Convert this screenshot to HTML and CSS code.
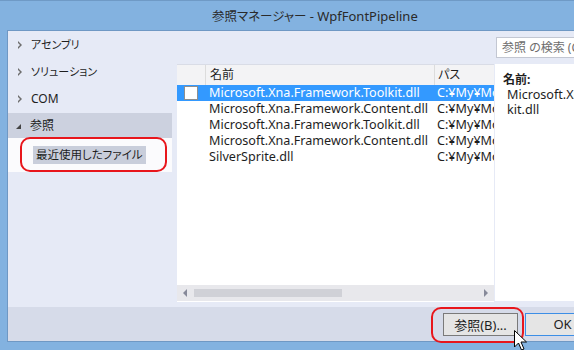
FILE: index.html
```html
<!DOCTYPE html>
<html lang="ja">
<head>
    <meta charset="UTF-8">
    <title>参照マネージャー</title>
    <link rel="stylesheet" href="styles.css">
</head>
<body>
    <div class="window">
        <div class="titlebar"><span class="title-ja">参照マネージャー</span> - WpfFontPipeline</div>
        <div class="client">
            <div class="main">
                <div class="nav">
                    <div class="nav-item"><span class="tri"></span>アセンブリ</div>
                    <div class="nav-item"><span class="tri"></span>ソリューション</div>
                    <div class="nav-item com"><span class="tri"></span>COM</div>
                    <div class="nav-item open"><span class="tri-open"></span>参照</div>
                    <div class="nav-sub">
                        <div class="mark mark-recent"><span class="sub-label">最近使用したファイル</span></div>
                    </div>
                </div>
                <div class="center">
                    <div class="list">
                        <div class="list-head">
                            <div class="col-check"></div>
                            <div class="col-name">名前</div>
                            <div class="col-path">パス</div>
                        </div>
                        <div class="rows">
                            <div class="row selected">
                                <div class="col-check"><span class="box"></span></div>
                                <div class="col-name">Microsoft.Xna.Framework.Toolkit.dll</div>
                                <div class="col-path">C:¥My¥MonoGame</div>
                            </div>
                            <div class="row">
                                <div class="col-check"></div>
                                <div class="col-name">Microsoft.Xna.Framework.Content.dll</div>
                                <div class="col-path">C:¥My¥MonoGame</div>
                            </div>
                            <div class="row">
                                <div class="col-check"></div>
                                <div class="col-name">Microsoft.Xna.Framework.Toolkit.dll</div>
                                <div class="col-path">C:¥My¥MonoGame</div>
                            </div>
                            <div class="row">
                                <div class="col-check"></div>
                                <div class="col-name">Microsoft.Xna.Framework.Content.dll</div>
                                <div class="col-path">C:¥My¥MonoGame</div>
                            </div>
                            <div class="row">
                                <div class="col-check"></div>
                                <div class="col-name">SilverSprite.dll</div>
                                <div class="col-path">C:¥My¥MonoGame</div>
                            </div>
                        </div>
                        <div class="hscroll">
                            <span class="arrow-left"></span>
                            <span class="thumb"></span>
                            <span class="arrow-right"></span>
                        </div>
                    </div>
                </div>
                <div class="side">
                    <div class="search">参照 の検索 (Ctrl+E)</div>
                    <div class="detail">
                        <div class="detail-label">名前:</div>
                        <div class="detail-value">Microsoft.Xna.Framework.Tool<br>kit.dll</div>
                    </div>
                </div>
            </div>
            <div class="footer">
                <div class="mark mark-browse"><button class="btn">参照(B)...</button></div>
                <button class="btn btn-default">OK</button>
                <svg class="cursor" width="14" height="22" viewBox="0 0 14 22">
                    <path d="M0.5 0.5 L0.5 17 L4.5 13 L7.5 20 L10 19 L7 12 L12.5 12 Z" fill="#fff" stroke="#000" stroke-width="1"/>
                </svg>
            </div>
        </div>
    </div>
</body>
</html>
```

FILE: styles.css
```css
body {
    margin: 0;
    width: 574px;
    height: 350px;
    overflow: hidden;
    font-family: "Noto Sans", "Noto Sans CJK JP", sans-serif;
    font-size: 12px;
    font-feature-settings: "palt";
    color: #1e1e1e;
}

.window {
    width: 700px;
    height: 350px;
    background: #83b2e0;
    border-top: 1px solid #6f9ac6;
    box-sizing: border-box;
    padding-left: 7px;
}

.titlebar {
    height: 29px;
    line-height: 30px;
    padding-left: 205px;
    font-size: 13px;
    color: #2a2a2a;
}

.title-ja {
    font-size: 12.5px;
}

.client {
    height: 310px;
    border: 1px solid #6f98c4;
    border-right: none;
    display: flex;
    flex-direction: column;
}

.main {
    height: 276px;
    background: #e6eaf6;
    display: flex;
}

/* left tree */
.nav {
    width: 164px;
    font-size: 11px;
}

.nav-item {
    height: 27px;
    line-height: 27px;
    padding-left: 23px;
    display: flex;
    align-items: center;
}

.nav-item.com {
    font-size: 12px;
}

.tri {
    width: 0;
    height: 0;
    margin-left: -13px;
    margin-right: 9px;
    border-left: 4px solid #6e6e6e;
    border-top: 4px solid transparent;
    border-bottom: 4px solid transparent;
    position: relative;
}

.tri::after {
    content: '';
    position: absolute;
    left: -4px;
    top: -2px;
    border-left: 2px solid #e6eaf6;
    border-top: 2px solid transparent;
    border-bottom: 2px solid transparent;
}

.nav-item.open {
    background: #ccd1df;
    height: 25px;
    margin-top: 1px;
    font-size: 12px;
}

.tri-open {
    width: 0;
    height: 0;
    margin-left: -15px;
    margin-right: 9px;
    border-right: 5px solid #444;
    border-top: 5px solid transparent;
    margin-top: 2px;
}

.nav-sub {
    background: #fbfbfd;
    height: 34px;
    padding-left: 25px;
    display: flex;
    align-items: center;
}

.sub-label {
    background: #c9cedb;
    padding: 1px 3px;
    line-height: 16px;
    font-size: 11.5px;
    display: inline-block;
}

.mark {
    position: relative;
}

.mark::after {
    content: '';
    position: absolute;
    border: 2px solid #e8161c;
    border-radius: 10px;
    pointer-events: none;
}

.mark-recent::after {
    left: -13px;
    right: -21px;
    top: -9px;
    bottom: -8px;
}

.mark-browse::after {
    left: -12px;
    right: -6px;
    top: -6px;
    bottom: -7px;
}

/* list */
.center {
    width: 317px;
    padding-left: 5px;
    padding-top: 33px;
}

.list {
    background: #fff;
    height: 237px;
    border-top: 1px solid #d9dce6;
    display: flex;
    flex-direction: column;
}

.list-head {
    display: flex;
    height: 20px;
    line-height: 20px;
    background: #f3f3f5;
}

.list-head > div {
    border-right: 1px solid #dcdcdc;
}

.col-check {
    width: 28px;
    flex: none;
    display: flex;
    align-items: center;
    justify-content: center;
}

.col-name {
    width: 229px;
    flex: none;
    padding-left: 4px;
    box-sizing: border-box;
    white-space: nowrap;
}

.col-path {
    flex: 1;
    padding-left: 3px;
    overflow: hidden;
    white-space: nowrap;
}

.list-head > .col-path {
    border-right: none;
}

.rows {
    flex: 1;
    font-size: 12.6px;
}

.row {
    display: flex;
    height: 16px;
    line-height: 16px;
}

.row .col-check {
    justify-content: flex-start;
    padding-left: 7px;
    box-sizing: border-box;
}

.row.selected {
    background: #3399ff;
    color: #fff;
}

.box {
    width: 12px;
    height: 12px;
    background: #fff;
    border: 1px solid #8e8f8f;
}

.hscroll {
    height: 16px;
    background: #e8e8ec;
    display: flex;
    align-items: center;
    margin-bottom: 1px;
}

.arrow-left {
    width: 0;
    height: 0;
    margin-left: 6px;
    border-right: 4px solid #868999;
    border-top: 4px solid transparent;
    border-bottom: 4px solid transparent;
}

.thumb {
    width: 148px;
    height: 8px;
    margin-left: 7px;
    background: #d0d1d7;
}

.arrow-right {
    width: 0;
    height: 0;
    margin-left: auto;
    margin-right: 6px;
    border-left: 4px solid #868999;
    border-top: 4px solid transparent;
    border-bottom: 4px solid transparent;
}

/* right panel */
.side {
    flex: 1;
    padding-left: 1px;
    padding-top: 6px;
}

.search {
    height: 19px;
    line-height: 19px;
    margin-left: 1px;
    border: 1px solid #c3c7d2;
    background: #fff;
    padding-left: 5px;
    color: #6d6d6d;
    white-space: nowrap;
    overflow: hidden;
}

.detail {
    margin-top: 6px;
    background: #fff;
    height: 237px;
    padding: 8px 0 0 8px;
    box-sizing: border-box;
    line-height: 15px;
}

.detail-label {
    font-weight: bold;
}

.detail-value {
    padding-left: 4px;
    white-space: nowrap;
    font-size: 12.6px;
}

/* footer */
.footer {
    flex: 1;
    background: #d6dbe9;
    display: flex;
    align-items: center;
    padding-left: 435px;
    gap: 7px;
    position: relative;
}

.btn {
    width: 75px;
    height: 23px;
    background: #e5e5e5;
    border: 1px solid #7a7a7a;
    font-family: "Noto Sans", "Noto Sans CJK JP", sans-serif;
    font-size: 13px;
    font-feature-settings: "palt";
    color: #1e1e1e;
    padding: 0;
    display: block;
}

.btn-default {
    border-color: #3c8ee6;
}

.cursor {
    position: absolute;
    left: 506px;
    top: 23px;
}
```
